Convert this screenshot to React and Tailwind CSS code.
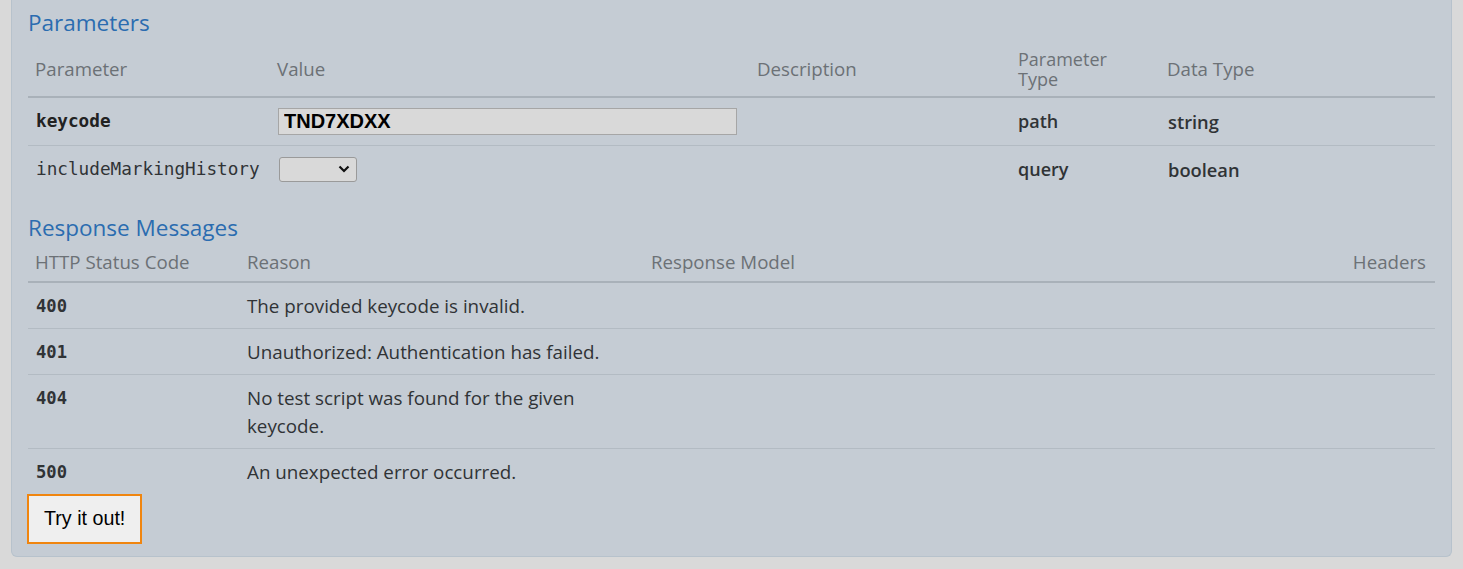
import React from 'react';

const paramRows = [
  { name: 'keycode', required: true, kind: 'text', value: 'TND7XDXX', type: 'path', dataType: 'string' },
  { name: 'includeMarkingHistory', required: false, kind: 'select', type: 'query', dataType: 'boolean' },
];

const responses = [
  { code: '400', reason: 'The provided keycode is invalid.' },
  { code: '401', reason: 'Unauthorized: Authentication has failed.' },
  { code: '404', reason: 'No test script was found for the given keycode.' },
  { code: '500', reason: 'An unexpected error occurred.' },
];

const sans = "font-['Open_Sans','Noto_Sans',sans-serif]";
const mono = "font-['DejaVu_Sans_Mono','Liberation_Mono',monospace]";

export default function App() {
  return (
    <div className={`min-h-screen bg-[#d9d9d9] px-[11px] pb-[12px] ${sans}`}>
      <div className="bg-[#c5ccd4] border-x border-b border-[#b7c2cc] rounded-b-[6px] px-[16px] pt-[7px] pb-[12px]">
        {/* Parameters */}
        <h4 className="text-[22.5px] leading-[32px] text-[#2b6cb0]">Parameters</h4>
        <table className="w-full border-collapse mt-[3px]">
          <thead>
            <tr className="border-b-2 border-[#a9b1b9] text-[#6c7176] text-[18.7px] text-left">
              <th className="font-normal w-[242px] pl-[7px] h-[55px] align-middle">Parameter</th>
              <th className="font-normal w-[480px] pl-[7px] align-middle">Value</th>
              <th className="font-normal w-[261px] pl-[7px] align-middle">Description</th>
              <th className="font-normal w-[149px] pl-[7px] align-middle text-[18px] leading-[20px]">
                <div>Parameter</div>
                <div>Type</div>
              </th>
              <th className="font-normal pl-[7px] align-middle">Data Type</th>
            </tr>
          </thead>
          <tbody className="text-[#303336]">
            {paramRows.map((p) => (
              <tr key={p.name} className="border-b border-[#b3bbc3] last:border-b-0 h-[48px]">
                <td className={`pl-[8px] ${mono} text-[17.7px] ${p.required ? 'font-bold text-[#222]' : 'font-normal'}`}>
                  {p.name}
                </td>
                <td className="pl-[8px]">
                  {p.kind === 'text' ? (
                    <input
                      readOnly
                      value={p.value}
                      className="w-[459px] h-[27px] bg-[#d9d9d9] border border-[#a6a6a6] px-[5px] text-[20px] font-bold text-black font-['Liberation_Sans',Arial,sans-serif] outline-none"
                    />
                  ) : (
                    <div className="ml-[1px] w-[78px] h-[25px] bg-[#d9d9d9] border border-[#9a9a9a] rounded-[3px] flex items-center justify-end pr-[6px]">
                      <svg width="12" height="8" viewBox="0 0 12 8" fill="none">
                        <path d="M1.5 1.5 L6 6 L10.5 1.5" stroke="#111" strokeWidth="2.2" />
                      </svg>
                    </div>
                  )}
                </td>
                <td />
                <td className="pl-[7px] text-[18px] font-semibold">{p.type}</td>
                <td className="pl-[8px] text-[18.3px] font-semibold">{p.dataType}</td>
              </tr>
            ))}
          </tbody>
        </table>

        {/* Response Messages */}
        <h4 className="text-[22.5px] leading-[32px] text-[#2b6cb0] mt-[19px]">Response Messages</h4>
        <table className="w-full border-collapse">
          <thead>
            <tr className="border-b-2 border-[#a9b1b9] text-[#6c7176] text-[18.7px] text-left">
              <th className="font-normal w-[212px] pl-[7px] h-[38px] align-middle">HTTP Status Code</th>
              <th className="font-normal w-[404px] pl-[7px] align-middle">Reason</th>
              <th className="font-normal pl-[7px] align-middle">Response Model</th>
              <th className="font-normal pr-[9px] text-right align-middle">Headers</th>
            </tr>
          </thead>
          <tbody className="text-[#303336]">
            {responses.map((r) => (
              <tr key={r.code} className="border-b border-[#b3bbc3] last:border-b-0">
                <td className={`pl-[8px] pt-[9px] pb-[8px] align-top ${mono} font-bold text-[17.2px] leading-[28px]`}>
                  {r.code}
                </td>
                <td className="pl-[7px] pt-[9px] pb-[8px] align-top text-[18.8px] leading-[28px]">
                  <div className="max-w-[380px]">{r.reason}</div>
                </td>
                <td />
                <td />
              </tr>
            ))}
          </tbody>
        </table>

        <button className="-ml-[1px] h-[50px] px-[15px] bg-[#efefef] border-2 border-[#f0850f] text-[19.7px] text-black font-['Liberation_Sans',Arial,sans-serif]">
          Try it out!
        </button>
      </div>
    </div>
  );
}
